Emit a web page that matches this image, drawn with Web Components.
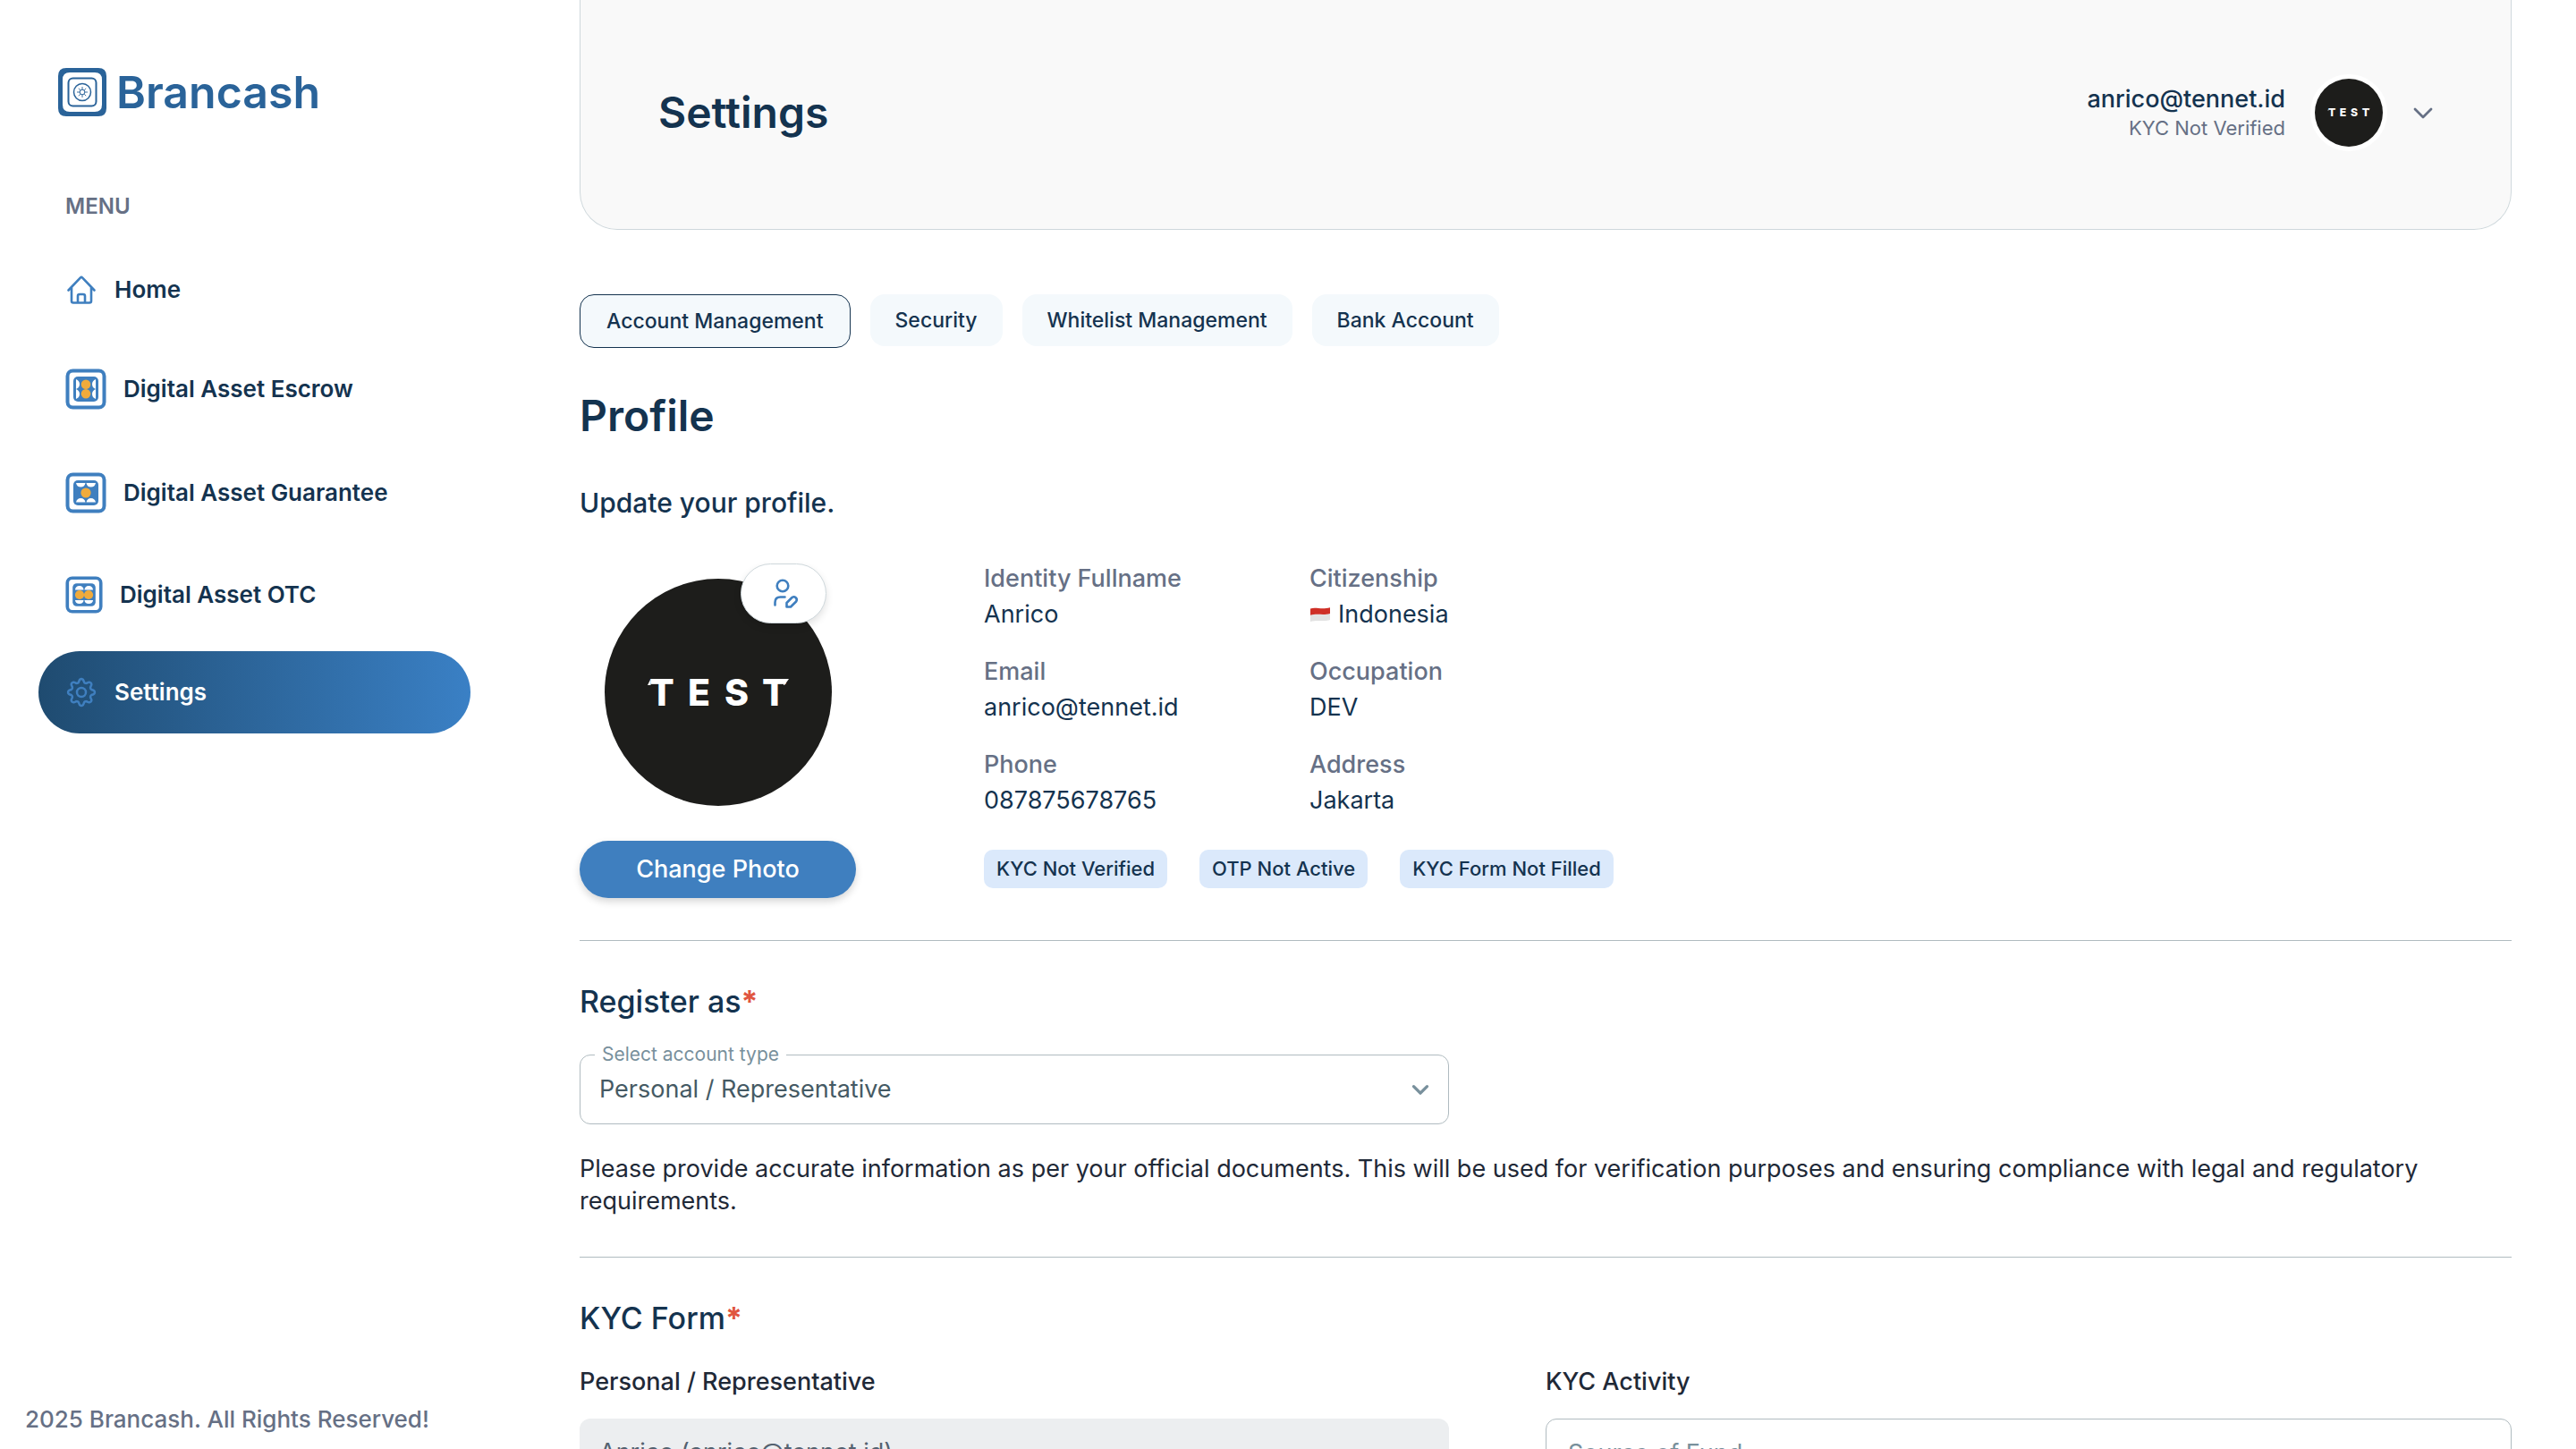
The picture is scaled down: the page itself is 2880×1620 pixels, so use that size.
<!DOCTYPE html>
<html lang="en">
<head>
<meta charset="utf-8">
<title>Brancash – Settings</title>
<style>
  :root {
    --navy: #14334f; --blue: #3f7fbf; --brand: #2a6399; --slate: #667085; --line: #b0bbc0;
    --tab: #f4f9fc; --ink: #1f2937;
    --fs-sm: 22px; --fs-nav: 26px; --fs: 27px; --fs-md: 30px; --fs-lg: 34px; --fs-xl: 48px;
  }
  body { margin: 0; background: #fff; color: var(--navy); font: 400 27px/40px Inter, "Open Sans", sans-serif; }
</style>
</head>
<body>
<bc-app>
  <bc-sidebar slot="side">
    <bc-nav-item icon="home">Home</bc-nav-item>
    <bc-nav-item icon="escrow">Digital Asset Escrow</bc-nav-item>
    <bc-nav-item icon="guarantee">Digital Asset Guarantee</bc-nav-item>
    <bc-nav-item icon="otc">Digital Asset OTC</bc-nav-item>
    <bc-nav-item icon="gear" active>Settings</bc-nav-item>
  </bc-sidebar>
  <bc-header email="anrico@tennet.id" status="KYC Not Verified">Settings</bc-header>
  <bc-tabs>
    <bc-tab active>Account Management</bc-tab>
    <bc-tab>Security</bc-tab>
    <bc-tab>Whitelist Management</bc-tab>
    <bc-tab>Bank Account</bc-tab>
  </bc-tabs>
  <bc-profile>
    <bc-fact slot="facts" label="Identity Fullname">Anrico</bc-fact>
    <bc-fact slot="facts" label="Citizenship" flag>Indonesia</bc-fact>
    <bc-fact slot="facts" label="Email">anrico@tennet.id</bc-fact>
    <bc-fact slot="facts" label="Occupation">DEV</bc-fact>
    <bc-fact slot="facts" label="Phone">087875678765</bc-fact>
    <bc-fact slot="facts" label="Address">Jakarta</bc-fact>
    <bc-badge slot="badges">KYC Not Verified</bc-badge>
    <bc-badge slot="badges">OTP Not Active</bc-badge>
    <bc-badge slot="badges">KYC Form Not Filled</bc-badge>
  </bc-profile>
  <bc-register></bc-register>
  <bc-kyc></bc-kyc>
</bc-app>

<script>
const define = (name, render) => customElements.define(name, class extends HTMLElement {
  constructor() { super(); this.attachShadow({ mode: 'open' }); }
  connectedCallback() {
    this.shadowRoot.innerHTML = '<style>*{box-sizing:border-box}h1,h2,h3,p{margin:0}button,select,input{font:inherit;margin:0}:host{display:block}</style>' + render(this);
  }
});

const frame = inner => `<rect x="2.5" y="2.5" width="41" height="41" rx="6" fill="#fff" stroke="#3f7fbf" stroke-width="4"/><rect x="9" y="9" width="28" height="28" rx="5" fill="#3f7fbf"/>${inner}`;
const icons = {
  home: `<svg width="36" height="36" viewBox="0 0 36 36" fill="none" stroke="#3f7fbf" stroke-width="2.6" stroke-linecap="round" stroke-linejoin="round"><path d="M3.5 18.5 17 4.4q1-1 2 0l13.500 14.100M7 15.500V30.500q0 2 2 2H27q2 0 2-2V15.500M14 32.500V25q0-2 2-2H20q2 0 2 2v7.500"/></svg>`,
  escrow: `<svg width="46" height="46" viewBox="0 0 46 46">${frame('<path d="M12 12q4 1.500 4 5.500T12 23q4 1.500 4 5.500T12 34zM34 12q-4 1.500-4 5.500T34 23q-4 1.500-4 5.500T34 34z" fill="#fff"/><circle cx="23" cy="17.800" r="5.300" fill="#f0ab3c"/><circle cx="23" cy="28.200" r="5.300" fill="#f0ab3c"/>')}</svg>`,
  guarantee: `<svg width="46" height="46" viewBox="0 0 46 46">${frame('<path d="M12 12H22.500q-1 4.600-5.200 4.600T12 12zM23.500 12H34q-1 4.600-5.300 4.600T23.500 12zM12 33.500q1-4.600 5.300-4.600t5.200 4.600zM23.500 33.500q1-4.600 5.200-4.600T34 33.500z" fill="#fff"/><circle cx="23" cy="23" r="5.600" fill="#f0ab3c"/>')}</svg>`,
  otc: `<svg width="42" height="42" viewBox="0 0 46 46">${frame('<path d="M12 17q.5-5 5.300-5t5.200 5zM23.500 17q.5-5 5.200-5T34 17zM12 29.500h10.500q-.5 4.500-5.200 4.500T12 29.500zM23.500 29.500H34q-.5 4.500-5.300 4.500t-5.200-4.500z" fill="#fff"/><circle cx="17.500" cy="23" r="5.600" fill="#f0ab3c"/><circle cx="28.500" cy="23" r="5.600" fill="#f0ab3c"/>')}</svg>`,
  gear: (() => {
    let d = '';
    for (let i = 0; i <= 96; i++) {
      const a = i / 96 * Math.PI * 2, s = Math.cos(8 * a), r = 13 + 1.9 * Math.sign(s) * Math.pow(Math.abs(s), .6);
      d += (i ? 'L' : 'M') + (18 + r * Math.sin(a)).toFixed(2) + ' ' + (18 - r * Math.cos(a)).toFixed(2);
    }
    return `<svg width="36" height="36" viewBox="0 0 36 36" fill="none" stroke="#3f7fbf" stroke-width="2.500" stroke-linejoin="round"><path d="${d}Z"/><circle cx="18" cy="18" r="5"/></svg>`;
  })()
};
const chevron = (size, w, color) => `<svg class="chev" width="${size}" height="${size}" viewBox="0 0 24 24" fill="none" stroke="${color}" stroke-width="${w}" stroke-linecap="round" stroke-linejoin="round"><path d="m3 8 9 9 9-9"/></svg>`;

define('bc-app', () => `<style>
  :host{display:flex;height:100vh}
  main{flex:1;min-width:0;overflow-y:auto;scrollbar-width:none;padding:0 72px 0 78px}
</style><slot name="side"></slot><main><slot></slot></main>`);

define('bc-sidebar', () => `<style>
  :host{flex:none;width:570px}
  aside{display:flex;flex-direction:column;height:100%;padding:69px 44px 13px 43px}
  .logo{display:flex;align-items:center;gap:11px;padding-left:22px;color:var(--brand);font-size:50px;font-weight:600;line-height:68px;text-decoration:none}
  h2{margin:74px 0 0 30px;font-size:24px;line-height:40px;font-weight:600;color:var(--slate)}
  nav{display:flex;flex-direction:column;gap:14px;margin-top:27px}
  footer{margin:auto -24px 0 -15px;font-size:var(--fs-nav);font-weight:500;color:var(--slate)}
</style><aside>
  <a class="logo" href="#"><svg width="54" height="54" viewBox="0 0 54 54" fill="none" stroke="#2a6399"><path fill="#2a6399" stroke="none" fill-rule="evenodd" d="M9 0H45Q54 0 54 9V45Q54 54 45 54H9Q0 54 0 45V9Q0 0 9 0ZM13 5Q5 5 5 13V41Q5 49 13 49H41Q49 49 49 41V13Q49 5 41 5Z"/><rect x="11.500" y="11.500" width="31" height="31" rx="5" stroke-width="2"/><circle cx="27" cy="27" r="9.500" stroke-width="1.500"/><circle cx="27" cy="27" r="2.800"/><path d="M27 21v3M27 30v3M21 27h3M30 27h3M22.800 22.800l2 2M29.200 29.200l2 2M31.200 22.800l-2 2M24.800 29.200l-2 2" stroke-width=".9"/></svg><span>Brancash</span></a>
  <h2>MENU</h2><nav><slot></slot></nav>
  <footer>2025 Brancash. All Rights Reserved!</footer>
</aside>`);

define('bc-nav-item', el => `<style>
  a{display:flex;align-items:center;gap:19px;padding:28px 30px;border-radius:46px;color:var(--navy);font-size:var(--fs-nav);font-weight:600;line-height:36px;text-decoration:none}
  svg{display:block;flex:none}
  :host([active]) a{color:#fff;background:linear-gradient(90deg,#1f4b70,#3a80c5)}
</style><a href="#">${icons[el.getAttribute('icon')]}<slot></slot></a>`);

define('bc-avatar', () => `<style>svg{display:block;width:100%;height:100%}</style>
<svg viewBox="0 0 254 254"><circle cx="127" cy="127" r="127" fill="#1d1d1b"/>
<text x="50 93 134 176" y="142" fill="#fff" font-family="Inter, sans-serif" font-weight="800" font-size="41">TEST</text>
<path d="M51.500 112v7h-3.500zM202 112h4l-5 7h-1z" fill="#fff"/></svg>`);

define('bc-header', el => `<style>
  header{display:flex;align-items:center;justify-content:space-between;height:257px;padding:0 86px 4px 87px;background:#f9f9f9;border:1px solid #cfd8dc;border-top:0;border-radius:0 0 42px 42px}
  h1{font-size:var(--fs-xl);line-height:60px;font-weight:600}
  .user{display:flex;align-items:center;padding:0;border:0;background:none;color:inherit;text-align:right}
  .user b,.user small{display:block}
  b{font-weight:500;font-size:var(--fs);line-height:34px}
  small{font-size:var(--fs-sm);line-height:30px;color:var(--slate)}
  bc-avatar{width:86px;height:86px;margin:0 28px;border:5px solid #fff;border-radius:50%}
</style><header><h1><slot></slot></h1><button class="user" type="button"><span><b>${el.getAttribute('email')}</b><small>${el.getAttribute('status')}</small></span><bc-avatar></bc-avatar>${chevron(24, 2.8, '#667085')}</button></header>`);

define('bc-tabs', () => `<style>:host{display:flex;align-items:flex-start;gap:22px;margin-top:72px}</style><slot></slot>`);
define('bc-tab', () => `<style>
  button{display:block;padding:11px 28px;border:0;border-radius:16px;background:var(--tab);color:var(--navy);font-size:23px;font-weight:500;line-height:36px}
  :host([active]) button{border:1px solid var(--navy);padding:11px 29px}
</style><button type="button"><slot></slot></button>`);

define('bc-fact', el => `<style>
  .label{color:var(--slate);font-weight:500}
  .value{display:flex;align-items:center;gap:8px}
</style><div class="label">${el.getAttribute('label')}</div><div class="value">${el.hasAttribute('flag') ? '<svg width="24" height="20" viewBox="0 0 24 20"><path d="M1 9.500C6 7.500 11 12 23 8.500V16C17 18.500 9 15.500 1 18z" fill="#e2e2e2"/><path d="M1 3.500C7 1.200 13 5 23 2.200V9C15 11.500 9 8.500 1 10.800z" fill="#cf2f26"/></svg>' : ''}<span><slot></slot></span></div>`);
define('bc-badge', () => `<style>span{display:block;padding:3px 14px 4px;border-radius:10px;background:#dbe9fb;font-size:var(--fs-sm);font-weight:500;line-height:36px}</style><span><slot></slot></span>`);

define('bc-profile', () => `<style>
  h2{margin-top:46px;font-size:var(--fs-xl);line-height:60px;font-weight:600}
  .lead{margin:47px 0 45px;font-size:var(--fs-md);font-weight:500}
  .row{display:flex;gap:143px;padding-bottom:47px;border-bottom:1px solid var(--line)}
  .photo{display:flex;flex-direction:column;align-items:center;gap:39px;width:309px;padding-top:20px}
  .pic{position:relative;width:254px;height:254px}
  .edit{position:absolute;right:6px;top:-17px;width:96px;height:67px;display:grid;place-items:center;border:1px solid #cfd8dc;border-radius:34px;background:#fff;box-shadow:0 4px 8px rgba(0,0,0,.12)}
  .change{width:100%;height:64px;border:0;border-radius:32px;background:var(--blue);color:#fff;font-weight:500;box-shadow:0 4px 8px rgba(0,0,0,.16)}
  .facts{display:grid;grid-template-columns:364px auto;row-gap:24px;justify-content:start}
  .badges{display:flex;gap:36px;margin-top:35px}
</style><h2>Profile</h2><p class="lead">Update your profile.</p>
<div class="row"><div class="photo"><div class="pic"><bc-avatar></bc-avatar><button class="edit" type="button" aria-label="Edit profile"><svg width="36" height="36" viewBox="0 0 36 36" fill="none" stroke="#3f7fbf" stroke-width="2.600" stroke-linecap="round" stroke-linejoin="round"><circle cx="17" cy="9" r="6.300"/><path d="M8.500 30.500V27.500Q8.500 21.500 14.500 21.500H19.500M21.500 32.500V28L27.500 22q2.200-1.600 4.200.2t.4 4.300L26 32.500z"/></svg></button></div><button class="change" type="button">Change Photo</button></div>
<div><div class="facts"><slot name="facts"></slot></div><div class="badges"><slot name="badges"></slot></div></div></div>`);

define('bc-select', el => `<style>
  .box{position:relative;height:78px}
  select{display:block;width:100%;height:100%;padding:0 60px 0 21px;appearance:none;border:1px solid var(--line);border-radius:12px;background:#fff;color:#455a64}
  :host([empty]) select{color:#78909c;padding-left:24px}
  .cap{position:absolute;left:17px;top:-15px;padding:0 8px;background:#fff;color:#78909c;font-size:21px;line-height:30px}
  .chev{position:absolute;right:22px;top:29px;pointer-events:none}
</style><div class="box"><select id="s" aria-label="${el.getAttribute('label')}"><option>${el.getAttribute('value')}</option></select>${el.hasAttribute('empty') ? '' : `<label class="cap" for="s">${el.getAttribute('label')}</label>`}${chevron(20, 4, '#78909c')}</div>`);

const section = `<style>
  h2{margin:44px 0 0;font-size:var(--fs-lg);line-height:48px;font-weight:500}
  h2 i{font-style:normal;font-weight:700;color:#e05540}
</style>`;
define('bc-register', () => section + `<style>
  :host{padding-bottom:44px;border-bottom:1px solid var(--line)}
  bc-select{width:45%;margin-top:35px}
  p{margin-top:32px;line-height:36px;color:var(--ink)}
</style><h2>Register as<i>*</i></h2><bc-select label="Select account type" value="Personal / Representative"></bc-select>
<p>Please provide accurate information as per your official documents. This will be used for verification purposes and ensuring compliance with legal and regulatory requirements.</p>`);

define('bc-kyc', () => section + `<style>
  .grid{display:grid;grid-template-columns:1fr 1fr;margin-top:27px}
  label,h3{display:block;margin-bottom:21px;font-size:var(--fs);line-height:40px;font-weight:500;color:var(--ink)}
  input{display:block;width:90%;height:74px;padding:0 22px;border:0;border-radius:12px;background:#eceef0;color:#546270}
</style><h2>KYC Form<i>*</i></h2><div class="grid">
<div><label for="person">Personal / Representative</label><input id="person" value="Anrico (anrico@tennet.id)" disabled></div>
<div><h3>KYC Activity</h3><bc-select empty label="Source of Fund" value="Source of Fund"></bc-select></div></div>`);
</script>
</body>
</html>
